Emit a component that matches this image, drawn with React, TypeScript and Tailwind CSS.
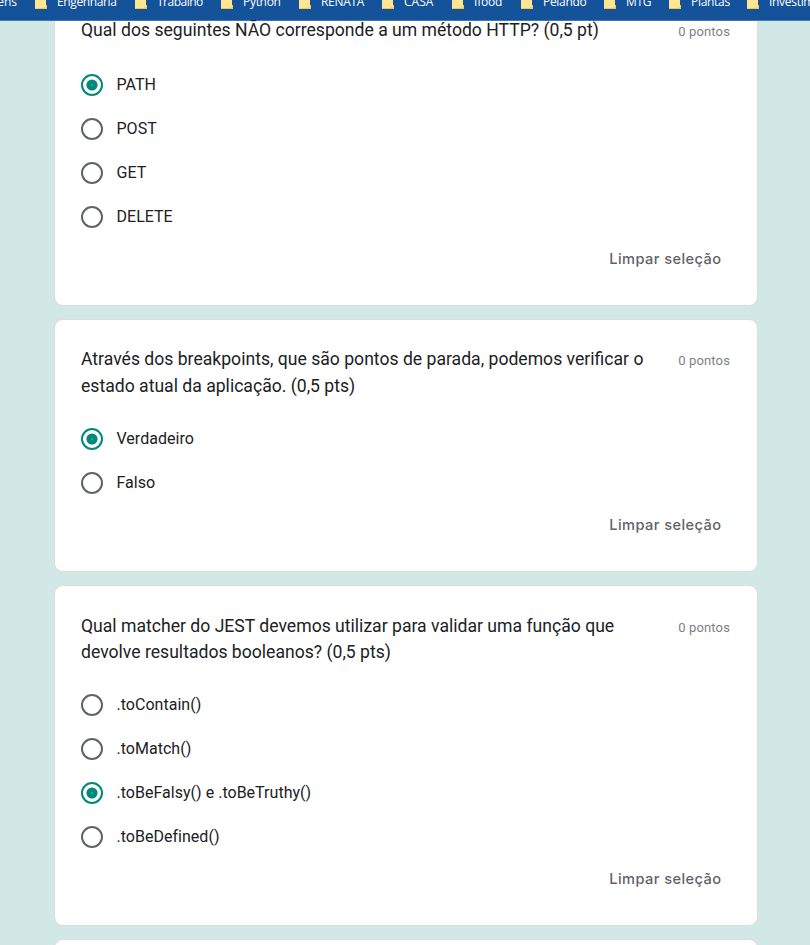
type Bookmark = { label: string; box: string; text: string };

const bookmarks: Bookmark[] = [
  { label: 'Engenharia', box: 'w-[100px]', text: 'tracking-[-0.380px]' },
  { label: 'Trabalho', box: 'w-[86px]', text: 'tracking-[-0.500px]' },
  { label: 'Python', box: 'w-[78px]', text: 'tracking-[-0.300px]' },
  { label: 'RENATA', box: 'w-[83px]', text: 'tracking-[-0.300px]' },
  { label: 'CASA', box: 'w-[70px]', text: 'tracking-[0px]' },
  { label: 'Ifood', box: 'w-[69px]', text: 'tracking-[-0.200px]' },
  { label: 'Pelando', box: 'w-[83px]', text: 'tracking-[-0.300px]' },
  { label: 'MTG', box: 'w-[65px]', text: 'tracking-[-0.300px]' },
  { label: 'Plantas', box: 'w-[78px]', text: 'tracking-[-0.300px]' },
  { label: 'Investimentos', box: 'w-[100px]', text: 'tracking-[-0.300px]' },
];

type Question = { title: string[]; options: string[]; selected: number; card: string; head: string; heading: string };

const questions: Question[] = [
  {
    title: ['Qual dos seguintes NÃO corresponde a um método HTTP? (0,5 pt)'],
    options: ['PATH', 'POST', 'GET', 'DELETE'],
    selected: 0,
    card: 'h-[285px] rounded-b-[9px] border-x border-b',
    head: 'h-[46px] -mt-[4px]',
    heading: 'leading-[26.400px]',
  },
  {
    title: [
      'Através dos breakpoints, que são pontos de parada, podemos verificar o',
      'estado atual da aplicação. (0,5 pts)',
    ],
    options: ['Verdadeiro', 'Falso'],
    selected: 0,
    card: 'mt-[13px] h-[253px] rounded-[9px] border',
    head: 'h-[97px] pt-[26px]',
    heading: 'leading-[27px]',
  },
  {
    title: [
      'Qual matcher do JEST devemos utilizar para validar uma função que',
      'devolve resultados booleanos? (0,5 pts)',
    ],
    options: ['.toContain()', '.toMatch()', '.toBeFalsy() e .toBeTruthy()', '.toBeDefined()'],
    selected: 2,
    card: 'mt-[13px] h-[341px] rounded-[9px] border',
    head: 'h-[97px] pt-[27px]',
    heading: 'leading-[26px]',
  },
];

function Folder() {
  return (
    <svg width="12" height="12" viewBox="0 0 12 12" className="mt-[-3px] shrink-0">
      <path d="M0 0h11v8h1v4H0z" fill="#ffe695" />
      <path d="M0 11h12v1H0z" fill="#edca55" />
      <path d="M11.500 8v4M9.500 9.500v1.500" stroke="#edca55" fill="none" />
    </svg>
  );
}

function Radio({ checked }: { checked: boolean }) {
  return (
    <svg width="22" height="22" viewBox="0 0 22 22" className="shrink-0">
      <circle cx="11" cy="11" r="10" fill="none" stroke={checked ? '#00897b' : '#5f6368'} strokeWidth="2" />
      {checked && <circle cx="11" cy="11" r="5.6" fill="#00897b" />}
      {checked && <rect x="10" y="10" width="2" height="2" fill="#2b9d91" />}
    </svg>
  );
}

function Card({ q }: { q: Question }) {
  return (
    <section className={`w-[704px] bg-white border-[#dadce0] px-[26px] ${q.card}`}>
      <div className={`flex justify-between ${q.head}`}>
        <h2 className={`whitespace-nowrap text-[17.600px] text-[#202124] ${q.heading}`}>
          {q.title.map((line) => (
            <span key={line} className="block">{line}</span>
          ))}
        </h2>
        <span className="mt-[6px] mr-px whitespace-nowrap text-[13px] leading-[18px] tracking-[0.130px] text-[#7d8186]">0 pontos</span>
      </div>
      <div>
        {q.options.map((option, i) => (
          <label key={option} className="flex h-11 items-center gap-[13.500px]">
            <Radio checked={i === q.selected} />
            <span className="-mt-px text-[16px] leading-[22px] tracking-[0.020px] text-[#202124]">{option}</span>
          </label>
        ))}
      </div>
      <div className="flex h-10 items-center justify-end pr-[9.500px]">
        <button className="mt-px whitespace-nowrap font-['Inter',sans-serif] text-[14.600px] font-medium tracking-[0.430px] text-[#5f6368]">
          Limpar seleção
        </button>
      </div>
    </section>
  );
}

export default function App() {
  return (
    <div className="flex h-[945px] w-[810px] flex-col overflow-hidden bg-[#d2e8e6] font-['Roboto',sans-serif]">
      <header className="flex h-[21px] shrink-0 items-start overflow-hidden border-b border-[#4278b6] bg-[#14529a] font-['Open_Sans','Noto_Sans',sans-serif] text-[12px] leading-4 font-medium text-white">
        <span className="mt-[-6px] flex w-[35px] justify-end pr-[18px]">Imagens</span>
        {bookmarks.map((b) => (
          <span key={b.label} className={`flex shrink-0 gap-[10px] ${b.box}`}>
            <Folder />
            <span className={`mt-[-6px] ${b.text}`}>{b.label}</span>
          </span>
        ))}
      </header>
      <main className="ml-[54px] flex flex-col">
        {questions.map((q) => (
          <Card key={q.title[0]} q={q} />
        ))}
        <section className="mt-[13px] h-10 w-[704px] rounded-t-[9px] border border-[#dadce0] bg-white" />
      </main>
    </div>
  );
}
